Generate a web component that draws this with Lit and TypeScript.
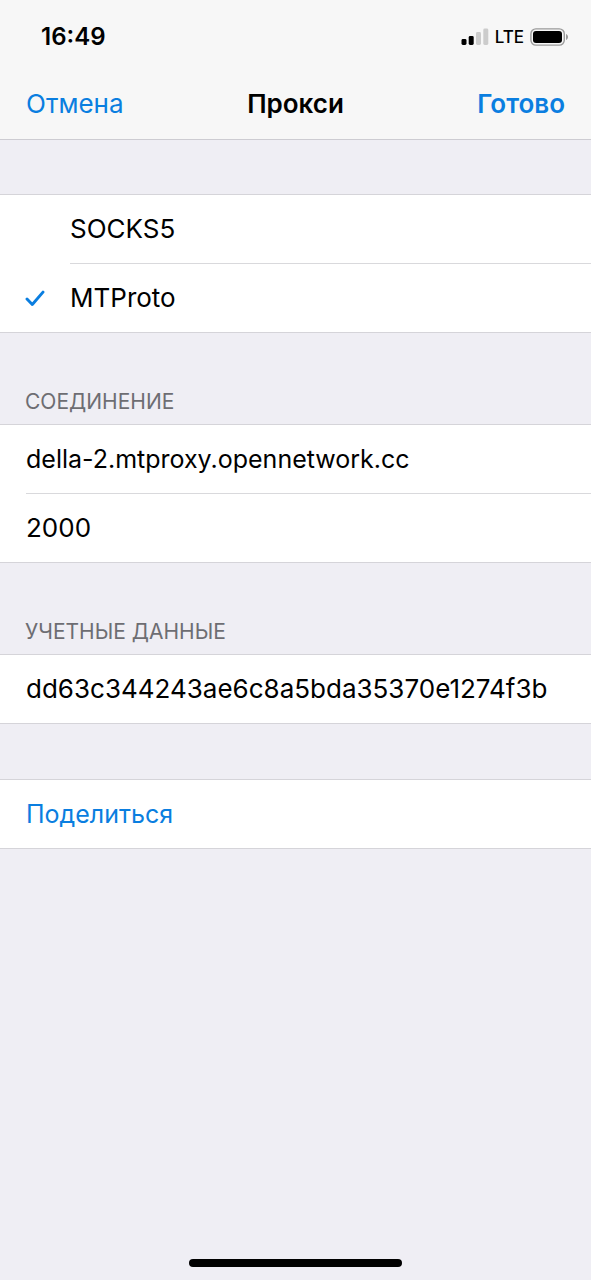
import { LitElement, html, css } from "lit";
import { customElement, state } from "lit/decorators.js";

const PROXY_TYPES = [
  { id: "socks5", label: "SOCKS5" },
  { id: "mtproto", label: "MTProto" },
];

@customElement("status-bar")
class StatusBar extends LitElement {
  static styles = css`
    :host {
      display: flex;
      align-items: center;
      justify-content: space-between;
      height: 70px;
      padding: 4px 22px 0 41px;
      box-sizing: border-box;
      color: #000;
    }
    .time {
      font-size: 24px;
      font-weight: 600;
      line-height: 28px;
    }
    .indicators {
      display: flex;
      align-items: center;
      gap: 6px;
    }
    .network {
      font-size: 17px;
      font-weight: 500;
      line-height: 24px;
    }
    svg {
      display: block;
    }
  `;

  render() {
    return html`
      <time class="time">16:49</time>
      <div class="indicators">
        <svg width="28" height="18" viewBox="0 0 28 18" aria-hidden="true">
          <rect x="0.5" y="11" width="5" height="6" rx="1.4" fill="#000" />
          <rect x="7.7" y="8" width="5" height="9" rx="1.4" fill="#000" />
          <rect x="15" y="4" width="5" height="13" rx="1.4" fill="#ccc" />
          <rect x="22.3" y="0.5" width="5" height="16.5" rx="1.4" fill="#ccc" />
        </svg>
        <span class="network">LTE</span>
        <svg width="39" height="18" viewBox="0 0 39 18" aria-hidden="true">
          <rect x="0.9" y="0.9" width="33.4" height="16.2" rx="5" fill="none" stroke="#9b9b9b" stroke-width="1.4" />
          <rect x="3" y="3" width="29" height="12" rx="3" fill="#000" />
          <path d="M36 6v6c1.3-.5 2-1.600 2-3s-.7-2.500-2-3z" fill="#9b9b9b" />
        </svg>
      </div>
    `;
  }
}

@customElement("app-root")
class AppRoot extends LitElement {
  @state() private selected = "mtproto";

  static styles = css`
    :host {
      display: flex;
      flex-direction: column;
      min-height: 100vh;
      background: #efeef4;
      color: #000;
      font-family: Inter, "Noto Sans", sans-serif;
      font-size: 26px;
      line-height: 32px;
    }
    button,
    input {
      margin: 0;
      padding: 0;
      border: 0;
      background: none;
      font: inherit;
      color: inherit;
    }
    .top {
      background: #f7f7f7;
      border-bottom: 1px solid #cdccd2;
    }
    .nav {
      display: grid;
      grid-template-columns: 1fr auto 1fr;
      align-items: center;
      height: 69px;
      padding: 0 26px 2px;
      box-sizing: border-box;
    }
    .title {
      margin: 0;
      font-size: 26px;
      font-weight: 600;
      line-height: 32px;
    }
    .link {
      color: #0a7ee0;
      text-align: left;
      cursor: pointer;
    }
    .done {
      justify-self: end;
      font-weight: 600;
    }
    .cancel {
      justify-self: start;
    }
    .form {
      display: flex;
      flex-direction: column;
      flex: 1;
    }
    .group {
      margin: 55px 0 0;
      padding: 0;
      border: 0;
      min-width: 0;
    }
    .types {
      margin-top: 54px;
    }
    .heading {
      padding: 0 25px;
      margin: 0 0 8px;
      color: #6d6d72;
      font-size: 21px;
      font-weight: 400;
      line-height: 28px;
    }
    .card {
      background: #fff;
      border-top: 1px solid #d5d4d9;
      border-bottom: 1px solid #d5d4d9;
    }
    .row {
      display: flex;
      align-items: center;
      height: 68px;
      margin-left: 26px;
    }
    .row + .row {
      border-top: 1px solid #d9d9dc;
    }
    .mark {
      display: grid;
      align-items: center;
      padding-left: 25px;
    }
    .options {
      display: grid;
      grid-template-columns: 70px 1fr;
    }
    .radio {
      appearance: none;
      width: 20px;
      height: 20px;
      grid-area: 1 / 1;
    }
    .check {
      grid-area: 1 / 1;
      width: 20px;
      height: 20px;
      pointer-events: none;
    }
    .label {
      display: flex;
      align-items: center;
      height: 68px;
      cursor: pointer;
    }
    .label.divided {
      border-top: 1px solid #d9d9dc;
    }
    .field {
      flex: 1;
      min-width: 0;
      height: 32px;
      outline: none;
    }
    .host,
    .share {
      font-size: 25px;
    }
    .share {
      flex: 1;
    }
    .home {
      width: 36%;
      height: 8px;
      margin: auto auto 13px;
      border-radius: 4px;
      background: #000;
    }
  `;

  private renderType(type: { id: string; label: string }, index: number) {
    return html`
      <span class="mark">
        <input
          class="radio"
          type="radio"
          name="type"
          id=${type.id}
          .checked=${this.selected === type.id}
          @change=${() => (this.selected = type.id)}
        />
        ${this.selected === type.id
          ? html`<svg class="check" viewBox="0 0 20 20" aria-hidden="true">
              <path
                d="M2 11 7.300 16.500 18 4.100"
                fill="none"
                stroke="#0a7ee0"
                stroke-width="2.900"
                stroke-linecap="round"
                stroke-linejoin="round"
              />
            </svg>`
          : null}
      </span>
      <label class="label ${index > 0 ? "divided" : ""}" for=${type.id}>${type.label}</label>
    `;
  }

  render() {
    return html`
      <header class="top">
        <status-bar></status-bar>
        <nav class="nav">
          <button class="link cancel" type="button">Отмена</button>
          <h1 class="title">Прокси</h1>
          <button class="link done" type="button">Готово</button>
        </nav>
      </header>
      <form class="form" @submit=${(e: Event) => e.preventDefault()}>
        <fieldset class="group types" aria-label="Прокси">
          <div class="card options">${PROXY_TYPES.map((t, i) => this.renderType(t, i))}</div>
        </fieldset>
        <section class="group">
          <h2 class="heading" id="connection">СОЕДИНЕНИЕ</h2>
          <div class="card">
            <div class="row">
              <input class="field host" type="text" aria-labelledby="connection" value="della-2.mtproxy.opennetwork.cc" />
            </div>
            <div class="row">
              <input class="field" type="text" inputmode="numeric" aria-labelledby="connection" value="2000" />
            </div>
          </div>
        </section>
        <section class="group">
          <h2 class="heading" id="credentials">УЧЕТНЫЕ ДАННЫЕ</h2>
          <div class="card">
            <div class="row">
              <input class="field" type="text" aria-labelledby="credentials" value="dd63c344243ae6c8a5bda35370e1274f3b" />
            </div>
          </div>
        </section>
        <section class="group">
          <div class="card">
            <div class="row">
              <button class="link share" type="button">Поделиться</button>
            </div>
          </div>
        </section>
        <div class="home"></div>
      </form>
    `;
  }
}
